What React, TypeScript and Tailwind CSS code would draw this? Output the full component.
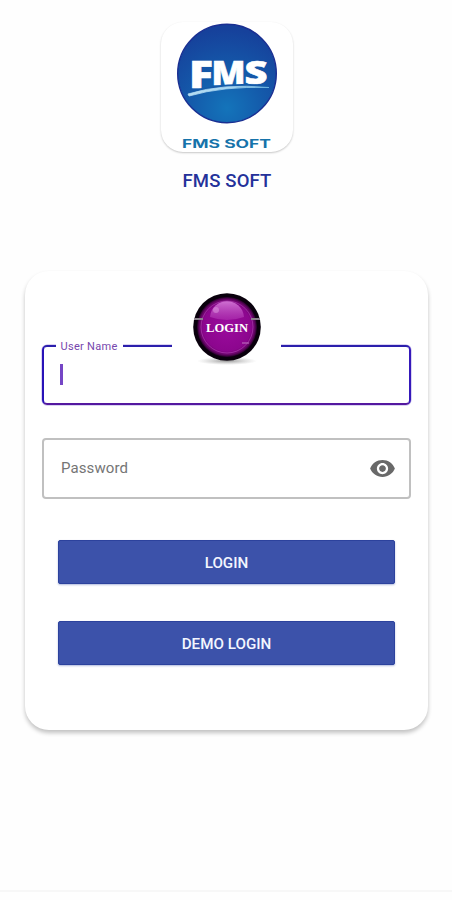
function FmsLogo() {
  return (
    <svg width="132" height="130" viewBox="0 0 132 130" role="img" aria-label="FMS">
      <defs>
        <radialGradient id="disc" cx="0.5" cy="0.85" r="0.8">
          <stop offset="0" stopColor="#1474ba" />
          <stop offset="0.45" stopColor="#145bab" />
          <stop offset="1" stopColor="#16419b" />
        </radialGradient>
        <linearGradient id="sweep" x1="0" x2="1">
          <stop offset="0" stopColor="#b5dcf2" />
          <stop offset="0.5" stopColor="#a9d8f2" />
          <stop offset="1" stopColor="#6db4e0" />
        </linearGradient>
      </defs>
      <circle cx="66" cy="51.5" r="49.3" fill="url(#disc)" stroke="#1a2f92" strokeWidth="1.4" />
      <g fontFamily="'Open Sans', 'Noto Sans', sans-serif" fontWeight="800" fill="#fff" stroke="#fff" strokeWidth="0.6">
        <text x="28" y="66" fontSize="37" textLength="24" lengthAdjust="spacingAndGlyphs">F</text>
        <text x="50.5" y="63" fontSize="33.5" textLength="34" lengthAdjust="spacingAndGlyphs">M</text>
        <text x="83.5" y="61.5" fontSize="31.5" textLength="23" lengthAdjust="spacingAndGlyphs">S</text>
      </g>
      <path d="M26 70.5Q62 58.5 107 63.5L107 67Q62 61 26 74Z" fill="#155aa9" />
      <path d="M27 72Q62 61 108 65.5Q62 64 28 74Z" fill="url(#sweep)" stroke="url(#sweep)" strokeWidth="0.8" />
      <text x="21" y="125.5" fontFamily="Inter, sans-serif" fontWeight="700" fontSize="11.6" fill="#1673aa" textLength="89" lengthAdjust="spacingAndGlyphs">FMS SOFT</text>
    </svg>
  );
}

function LoginBadge() {
  return (
    <svg width="109" height="80" viewBox="0 0 109 80" role="img" aria-label="LOGIN">
      <defs>
        <radialGradient id="orb" cx="0.5" cy="0.5" r="0.5">
          <stop offset="0" stopColor="#9b0b9d" />
          <stop offset="0.8" stopColor="#8c068e" />
          <stop offset="0.92" stopColor="#680468" />
          <stop offset="1" stopColor="#210024" />
        </radialGradient>
        <linearGradient id="gloss" x1="0" y1="0" x2="0" y2="1">
          <stop offset="0" stopColor="#cf70d2" />
          <stop offset="1" stopColor="#b43bb7" stopOpacity="0.5" />
        </linearGradient>
        <radialGradient id="floor">
          <stop offset="0" stopColor="#777" stopOpacity="0.75" />
          <stop offset="1" stopColor="#aaa" stopOpacity="0" />
        </radialGradient>
      </defs>
      <ellipse cx="55" cy="71" rx="30" ry="4" fill="url(#floor)" />
      <circle cx="55" cy="37" r="33.8" fill="#09000c" />
      <circle cx="55" cy="37" r="30" fill="url(#orb)" />
      <circle cx="55" cy="37" r="26" fill="none" stroke="#c457c8" strokeWidth="0.8" opacity="0.6" />
      <path d="M38 27C40 6 70 6 72 27Q55 33 38 27Z" fill="url(#gloss)" />
      <path d="M22 29H31M79 29H88" stroke="#8b818d" strokeWidth="2" />
      <circle cx="44" cy="20" r="3" fill="#df9be2" opacity="0.5" />
      <path d="M70 53h7" stroke="#b865ba" strokeWidth="2" opacity="0.6" />
      <text x="34" y="42" fontFamily="'Liberation Serif', serif" fontWeight="700" fontSize="13.5" fill="#fff" textLength="42" lengthAdjust="spacingAndGlyphs">LOGIN</text>
    </svg>
  );
}

function ActionButton({ label }: { label: string }) {
  return (
    <button className="flex h-11 w-full items-center justify-center rounded-[2px] border border-[#2c429d] bg-[#3c52aa] pt-0.5 text-[15.2px] font-medium text-[#f3f6ff] shadow-[0_1px_2px_rgba(60,82,170,0.4)]">
      {label}
    </button>
  );
}

export default function App() {
  return (
    <main className="flex h-[900px] w-[452px] flex-col bg-[#fefefe] font-[Roboto,sans-serif]">
      <header className="flex h-[271px] flex-col items-center pt-[22px] pl-[2px]">
        <div className="h-[130px] w-[132px] rounded-[22px] bg-white shadow-[0_1px_2px_rgba(0,0,0,0.22)]">
          <FmsLogo />
        </div>
        <h1 className="mt-[15px] text-[18.5px] leading-7 font-medium tracking-[0.15px] text-[#24319a]">FMS SOFT</h1>
      </header>

      <section className="ml-[25px] flex h-[459px] w-[403px] flex-col rounded-[24px] bg-white px-[17px] pt-[74px] shadow-[0_3px_4px_rgba(0,0,0,0.24)]">
        <div className="relative h-[60px] w-[369px] rounded-[5px] border-2 border-t-[#2b1fac] border-r-[#3519ba] border-b-[#5418a0] border-l-[#2812b8] shadow-[0_0_0_0.5px_#b5a8e6]">
          <label className="absolute -top-[9px] left-[12px] h-[18px] w-[67px] bg-white pl-[4.5px] text-[11px] leading-[18px] tracking-[0.3px] whitespace-nowrap text-[#7646ad]">
            User Name
          </label>
          <div className="absolute -top-[57px] left-[128px] h-[80px] w-[109px] bg-white">
            <LoginBadge />
          </div>
          <div className="mt-[17px] ml-[16px] h-[21px] w-[3px] bg-[#7546c5]" />
        </div>

        <div className="mt-[33px] flex h-[61px] w-[369px] items-center justify-between rounded-[4px] border-2 border-[#c0c0c0] pr-[13px] pl-[17px]">
          <span className="text-[15px] tracking-[0.1px] text-[#757575]">Password</span>
          <svg width="27" height="27" viewBox="0 0 24 24" fill="#696969" aria-hidden="true">
            <path d="M12 4.5C7 4.5 2.73 7.61 1 12c1.73 4.39 6 7.5 11 7.5s9.27-3.11 11-7.5c-1.73-4.39-6-7.5-11-7.5zM12 17c-2.76 0-5-2.24-5-5s2.24-5 5-5 5 2.24 5 5-2.24 5-5 5zm0-8c-1.66 0-3 1.34-3 3s1.34 3 3 3 3-1.34 3-3-1.34-3-3-3z" />
          </svg>
        </div>

        <div className="mt-[41px] flex flex-col gap-[37px] px-[16px]">
          <ActionButton label="LOGIN" />
          <ActionButton label="DEMO LOGIN" />
        </div>
      </section>

      <div className="mt-[160px] h-[2px] w-full bg-[#f7f7f7]" />
    </main>
  );
}
